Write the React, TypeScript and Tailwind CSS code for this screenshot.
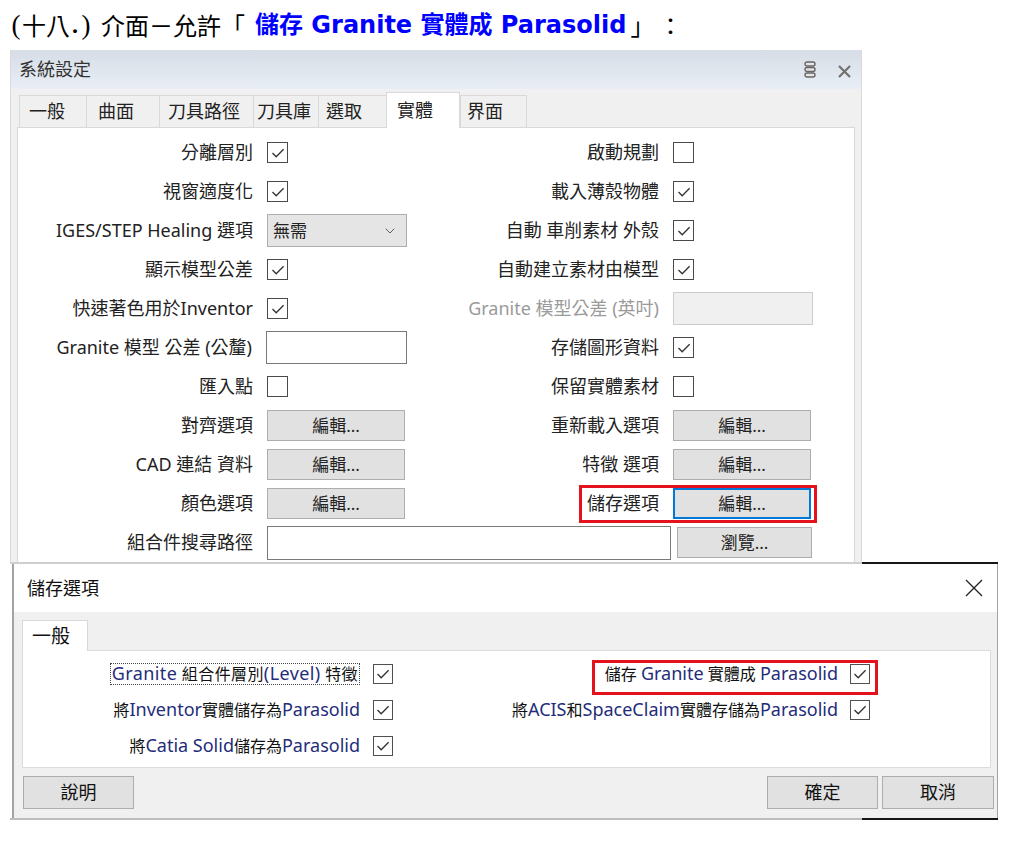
import React from "react";
import { ChevronDown } from "lucide-react";

const ui = "font-['Noto_Sans','Noto_Sans_CJK_TC',sans-serif]";

function Box({ on, small }: { on?: boolean; small?: boolean }) {
  return (
    <span
      className={
        small
          ? "w-[20px] h-[20px] border border-[#505050] bg-white flex items-center justify-center shrink-0"
          : "w-[21px] h-[21px] border-[1.5px] border-[#4a4a4a] bg-white flex items-center justify-center shrink-0"
      }
    >
      {on && (
        <svg width="16" height="16" viewBox="0 0 16 16">
          <path d="M2.5 8 L6.2 11.8 L13.6 4.2" fill="none" stroke="#333" strokeWidth="1.3" />
        </svg>
      )}
    </span>
  );
}

function EditBtn({ label = "編輯...", focus }: { label?: string; focus?: boolean }) {
  return (
    <span
      className={
        focus
          ? "w-[138px] h-[31px] bg-[#e1e1e1] border-2 border-[#0078d7] flex items-center justify-center text-[17px] text-[#222]"
          : "w-[138px] h-[31px] bg-[#e1e1e1] border border-[#adadad] flex items-center justify-center text-[17px] text-[#222]"
      }
    >
      {label}
    </span>
  );
}

const tabs = [
  { label: "一般", cls: "w-[67px] pl-[9px]" },
  { label: "曲面", cls: "w-[73px] pl-[11px]" },
  { label: "刀具路徑", cls: "w-[94px] pl-[8px]" },
  { label: "刀具庫", cls: "w-[65px] pl-[3px]" },
  { label: "選取", cls: "w-[68px] pl-[7px]" },
  { label: "實體", cls: "w-[74px] pl-[10px]", active: true },
  { label: "界面", cls: "w-[67px] pl-[6px]" },
];

const rows: { left: string; lc: React.ReactNode; right: string; rc: React.ReactNode; dim?: boolean; mark?: boolean }[] = [
  { left: "分離層別", lc: <Box on />, right: "啟動規劃", rc: <Box /> },
  { left: "視窗適度化", lc: <Box on />, right: "載入薄殼物體", rc: <Box on /> },
  {
    left: "IGES/STEP Healing 選項",
    lc: (
      <span className="w-[140px] h-[33px] bg-[#e5e5e5] border border-[#adadad] flex items-center justify-between pl-[5px] pr-[8px] text-[17px]">
        無需
        <ChevronDown size={16} strokeWidth={1.4} color="#555" />
      </span>
    ),
    right: "自動 車削素材 外殼",
    rc: <Box on />,
  },
  { left: "顯示模型公差", lc: <Box on />, right: "自動建立素材由模型", rc: <Box on /> },
  {
    left: "快速著色用於Inventor",
    lc: <Box on />,
    right: "Granite 模型公差 (英吋)",
    rc: <span className="w-[140px] h-[33px] bg-[#f0f0f0] border border-[#cccccc]" />,
    dim: true,
  },
  {
    left: "Granite 模型 公差 (公釐)",
    lc: <span className="w-[141px] h-[33px] bg-white border border-[#7a7a7a]" />,
    right: "存儲圖形資料",
    rc: <Box on />,
  },
  { left: "匯入點", lc: <Box />, right: "保留實體素材", rc: <Box /> },
  { left: "對齊選項", lc: <EditBtn />, right: "重新載入選項", rc: <EditBtn /> },
  { left: "CAD 連結 資料", lc: <EditBtn />, right: "特徵 選項", rc: <EditBtn /> },
  { left: "顏色選項", lc: <EditBtn />, right: "儲存選項", rc: <EditBtn focus />, mark: true },
];

function SystemSettings() {
  return (
    <div className={`ml-[10px] w-[852px] h-[512px] bg-[#f0f0f0] border-x border-[#dadada] flex flex-col ${ui} text-[#222]`}>
      <div className="h-[39px] shrink-0 bg-linear-to-b from-[#d6dde6] to-[#e9eef5] flex items-center pl-[8px] pr-[10px]">
        <span className="text-[18px] text-[#333]">系統設定</span>
        <div className="flex-1" />
        <svg width="12" height="17" viewBox="0 0 12 17" className="mr-[22px]">
          <rect x="1" y="1" width="10" height="4" rx="2" fill="#e4e4e4" stroke="#666" strokeWidth="1.4" />
          <rect x="1" y="6.5" width="10" height="4" rx="2" fill="#e4e4e4" stroke="#666" strokeWidth="1.4" />
          <rect x="1" y="12" width="10" height="4" rx="2" fill="#e4e4e4" stroke="#666" strokeWidth="1.4" />
        </svg>
        <svg width="13" height="13" viewBox="0 0 13 13" className="mt-[4px]">
          <path d="M1 1 L12 12 M12 1 L1 12" stroke="#707070" strokeWidth="2.2" />
        </svg>
      </div>
      <div className="h-[38px] shrink-0 flex items-end pl-[8px] relative z-10">
        {tabs.map((t) =>
          t.active ? (
            <div key={t.label} className={`${t.cls} h-[36px] -mb-px bg-white border-x border-t border-[#d9d9d9] flex items-center text-[18px]`}>
              {t.label}
            </div>
          ) : (
            <div key={t.label} className={`${t.cls} h-[32px] border-l border-t border-[#d9d9d9] last:border-r flex items-center text-[18px]`}>
              {t.label}
            </div>
          )
        )}
      </div>
      <div className="mx-[6px] flex-1 bg-white border border-[#d9d9d9] pt-[5px] text-[18px]">
        {rows.map((r) => (
          <div key={r.left} className="h-[39px] flex items-center">
            <div className="w-[389px] flex items-center">
              <span className="w-[235px] text-right whitespace-nowrap">{r.left}</span>
              <span className="ml-[14px] flex">{r.lc}</span>
            </div>
            <div className="relative flex items-center">
              <span className={r.dim ? "w-[252px] text-right whitespace-nowrap text-[#9a9a9a]" : "w-[252px] text-right whitespace-nowrap"}>{r.right}</span>
              <span className="ml-[14px] flex">{r.rc}</span>
              {r.mark && <span className="absolute left-[172px] top-[-3px] w-[238px] h-[38px] border-[3px] border-[#e4121d]" />}
            </div>
          </div>
        ))}
        <div className="h-[39px] flex items-center">
          <span className="w-[235px] text-right whitespace-nowrap">組合件搜尋路徑</span>
          <span className="ml-[14px] w-[404px] h-[34px] bg-white border border-[#7a7a7a]" />
          <span className="ml-[6px] w-[135px] h-[31px] bg-[#e1e1e1] border border-[#adadad] flex items-center justify-center text-[17px]">
            瀏覽...
          </span>
        </div>
      </div>
    </div>
  );
}

// latin runs in the save dialog render a bit wider and navy
const en = "text-[18px] leading-none text-[#1f2d7a]";

function SaveOptions() {
  return (
    <div className={`ml-[10px] w-[988px] flex flex-col ${ui} text-[#111]`}>
      <div className="flex h-[2px]">
        <div className="w-[852px] bg-[#cfcfcf]" />
        <div className="flex-1 bg-[#161616]" />
      </div>
      <div className="ml-[2px] border-l-2 border-r border-[#a3a3a3] flex flex-col">
        <div className="h-[48px] bg-white flex items-center pl-[13px] pr-[14px]">
          <span className="text-[18px]">儲存選項</span>
          <div className="flex-1" />
          <svg width="18" height="18" viewBox="0 0 18 18">
            <path d="M1 1 L17 17 M17 1 L1 17" stroke="#222" strokeWidth="1.3" />
          </svg>
        </div>
        <div className="bg-[#f0f0f0] pl-[8px] pt-[8px] pb-[9px] pr-[3px] flex flex-col">
          <div className="flex">
            <div className="w-[66px] h-[31px] -mb-px bg-white border-x border-t border-[#d9d9d9] flex items-center pl-[9px] text-[19px] relative z-10">
              一般
            </div>
          </div>
          <div className="w-[969px] h-[118px] bg-white border border-[#dcdcdc] pt-[5px] text-[16px] whitespace-nowrap">
            <div className="h-[36px] flex items-center">
              <div className="w-[370px] flex items-center">
                <span className="w-[337px] flex justify-end">
                  <span className="border border-dotted border-[#444] px-px leading-[19px] tracking-[0.4px]">
                    <span className={en}>Granite</span> 組合件層別<span className={en}>(Level)</span> 特徵
                  </span>
                </span>
                <span className="ml-[13px] flex"><Box on small /></span>
              </div>
              <div className="relative flex items-center">
                <span className="w-[445px] text-right">
                  儲存 <span className={en}>Granite</span> 實體成 <span className={en}>Parasolid</span>
                </span>
                <span className="ml-[12px] flex"><Box on small /></span>
                <span className="absolute left-[199px] top-[-2px] w-[286px] h-[35px] border-[3px] border-[#e4121d]" />
              </div>
            </div>
            <div className="h-[36px] flex items-center">
              <div className="w-[370px] flex items-center">
                <span className="w-[337px] text-right">
                  將<span className={en}>Inventor</span>實體儲存為<span className={en}>Parasolid</span>
                </span>
                <span className="ml-[13px] flex"><Box on small /></span>
              </div>
              <div className="flex items-center">
                <span className="w-[445px] text-right">
                  將<span className={en}>ACIS</span>和<span className={en}>SpaceClaim</span>實體存儲為<span className={en}>Parasolid</span>
                </span>
                <span className="ml-[12px] flex"><Box on small /></span>
              </div>
            </div>
            <div className="h-[36px] flex items-center">
              <div className="w-[370px] flex items-center">
                <span className="w-[337px] text-right">
                  將<span className={en}>Catia Solid</span>儲存為<span className={en}>Parasolid</span>
                </span>
                <span className="ml-[13px] flex"><Box on small /></span>
              </div>
            </div>
          </div>
          <div className="mt-[8px] flex items-center text-[18px]">
            <span className="w-[111px] h-[33px] ml-px bg-[#e1e1e1] border border-[#adadad] flex items-center justify-center">說明</span>
            <div className="flex-1" />
            <span className="w-[111px] h-[33px] bg-[#e1e1e1] border border-[#adadad] flex items-center justify-center">確定</span>
            <span className="ml-[4px] w-[112px] h-[33px] bg-[#e1e1e1] border border-[#adadad] flex items-center justify-center">取消</span>
          </div>
        </div>
      </div>
      <div className="flex h-[2px]">
        <div className="w-[852px] bg-[#bdbdbd]" />
        <div className="w-[136px] bg-[#161616]" />
      </div>
    </div>
  );
}

export default function App() {
  return (
    <div className="w-[1020px] h-[845px] bg-white overflow-hidden">
      <div className="h-[50px] pl-[10px] flex items-center text-[24px] text-black whitespace-nowrap font-['Noto_Sans_CJK_TC',serif]">
        <span className="w-[12px] text-center font-['Liberation_Serif',serif] text-[27px]">(</span>
        <span>十八</span>
        <span className="w-[10px] text-center font-['Liberation_Serif',serif] font-bold">.</span>
        <span className="w-[12px] text-center font-['Liberation_Serif',serif] text-[27px]">)</span>
        <span className="ml-[9px]">介面－允許「</span>
        <span className="ml-[10px] font-bold text-[#0000ff] text-[24px] font-['DejaVu_Sans','Noto_Sans_CJK_TC',sans-serif]">
          儲存 Granite 實體成 Parasolid
        </span>
        <span className="ml-[4px]">」</span>
        <span className="ml-[4px]">：</span>
      </div>
      <SystemSettings />
      <SaveOptions />
    </div>
  );
}
